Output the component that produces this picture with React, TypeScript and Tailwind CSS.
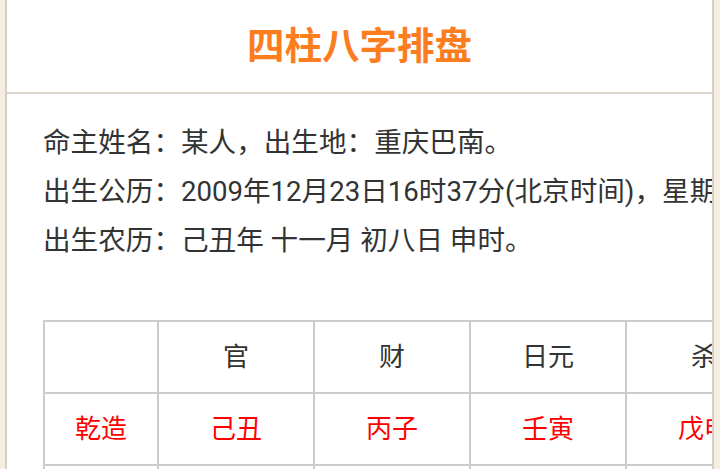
const font = { fontFamily: 'Roboto, "Noto Sans CJK SC", sans-serif' };

const heads = ["", "官", "财", "日元", "杀"];
const pillars = ["乾造", "己丑", "丙子", "壬寅", "戊申"];
const widths = ["w-[114px]", "w-[156px]", "w-[156px]", "w-[156px]", "w-[156px]"];

function Row({ cells, color }: { cells: string[]; color: string }) {
  return (
    <div className="flex">
      {cells.map((c, i) => (
        <div
          key={i}
          className={`${widths[i]} h-[72px] shrink-0 border-t-2 border-l-2 border-[#cccccc] flex items-center justify-center ${color}`}
        >
          {c}
        </div>
      ))}
    </div>
  );
}

export default function App() {
  return (
    <div className="h-[469px] w-[720px] overflow-hidden bg-[#f5eee2] pl-[5px]" style={font}>
      <div className="h-full w-[709px] overflow-hidden border-x-2 border-[#d8cfc2] bg-white">
        <div className="flex h-[94px] items-center justify-center border-b-2 border-[#ddd5c9]">
          <h1 className="text-[37.5px] font-bold text-[#fb7d1e]">四柱八字排盘</h1>
        </div>
        <div className="pl-[36px] pt-[24px] text-[27.6px] leading-[49px] text-[#333333] whitespace-nowrap">
          <p>命主姓名：某人，出生地：重庆巴南。</p>
          <p>出生公历：2009年12月23日16时37分(北京时间)，星期三</p>
          <p>出生农历：己丑年 十一月 初八日 申时。</p>
        </div>
        <div className="ml-[36px] mt-[55px] text-[26px]">
          <Row cells={heads} color="text-[#333333]" />
          <Row cells={pillars} color="text-[#ff0000]" />
          <Row cells={["", "", "", "", ""]} color="" />
        </div>
      </div>
    </div>
  );
}
